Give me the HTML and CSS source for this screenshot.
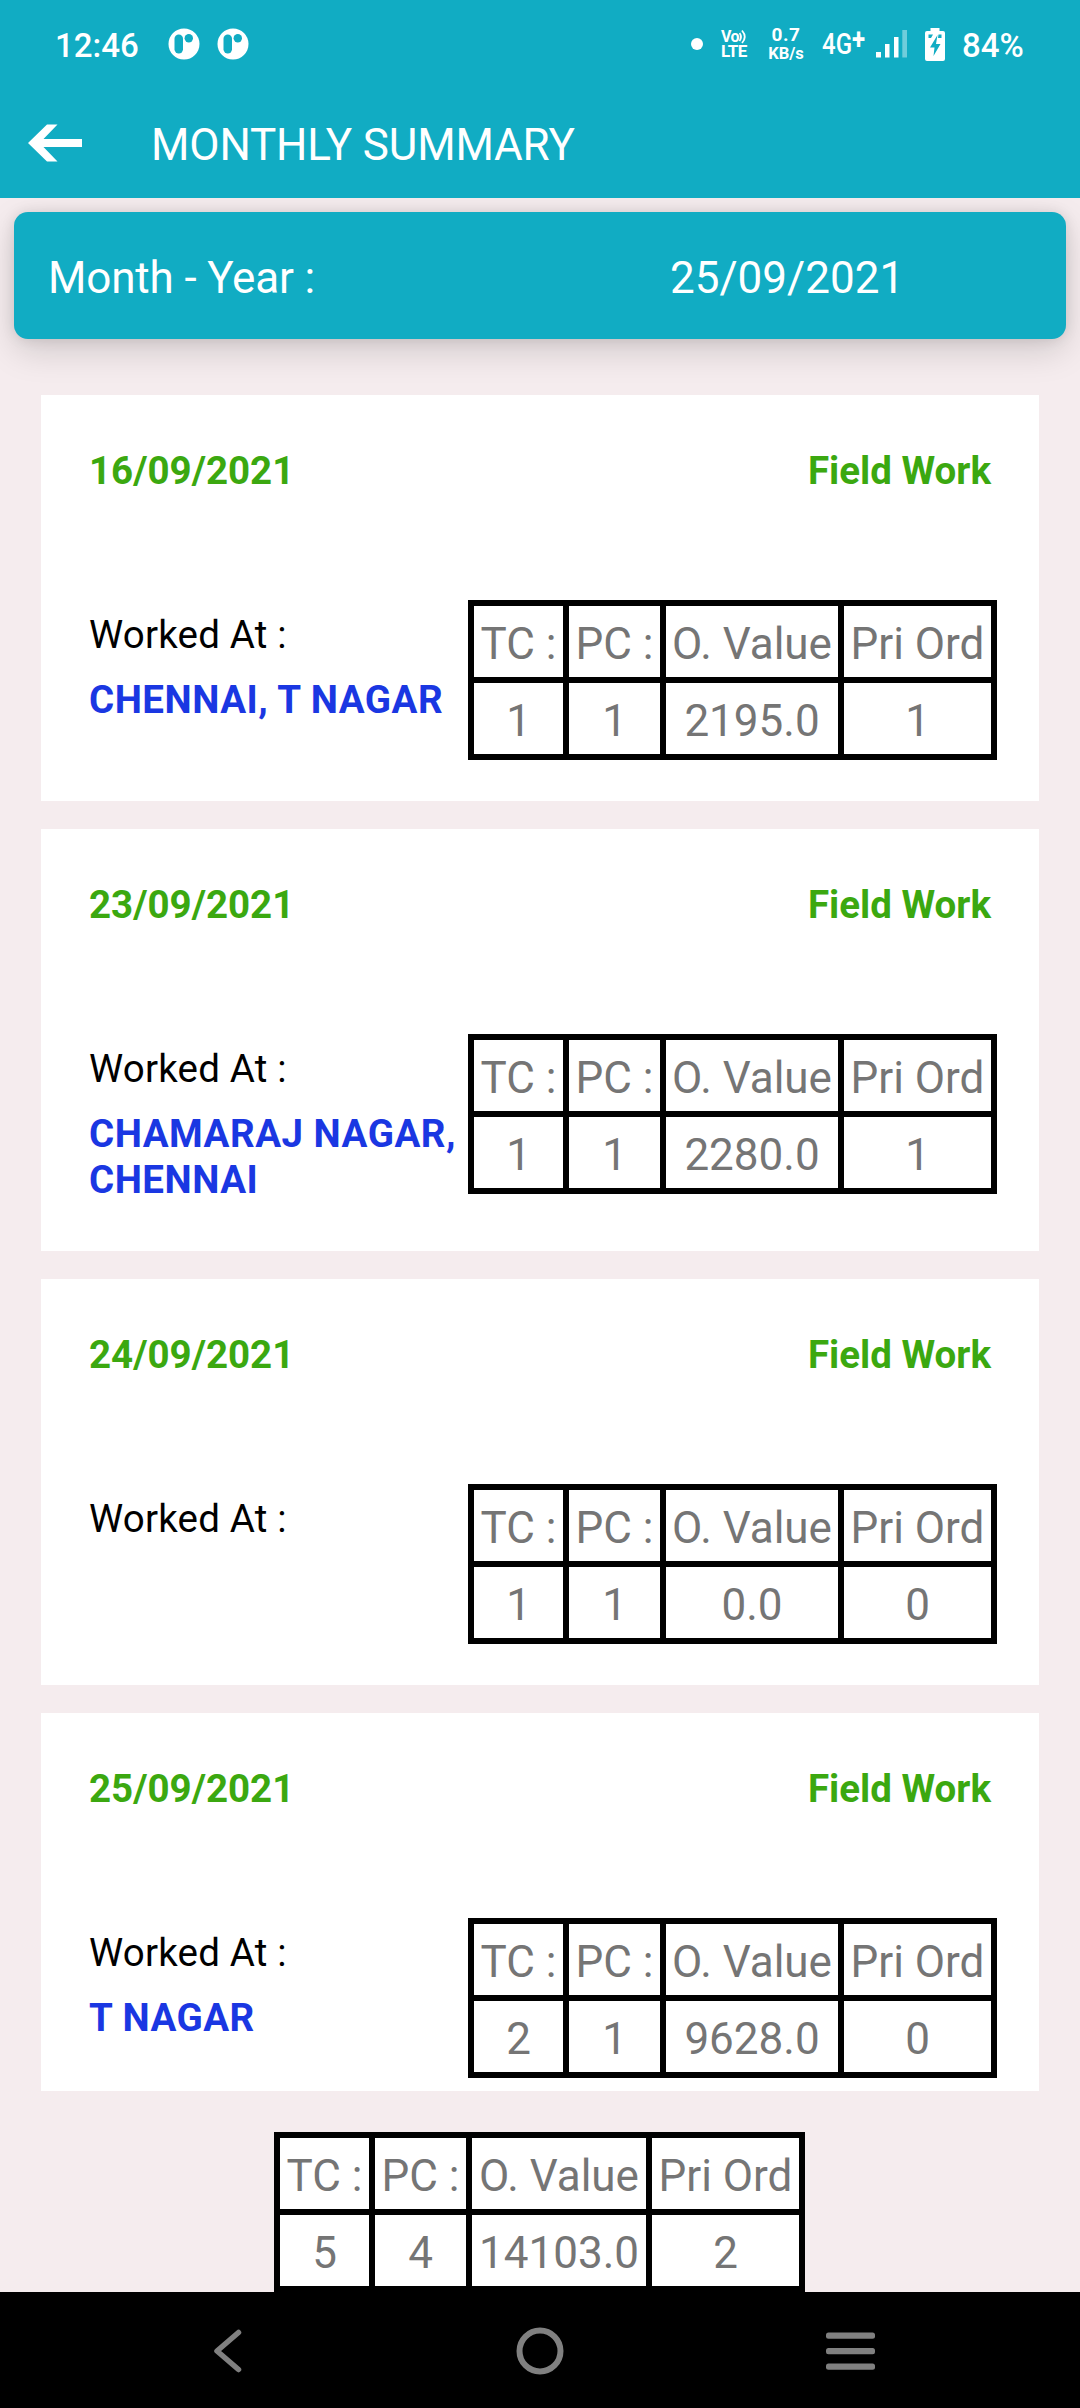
FILE: index.html
```html
<!DOCTYPE html>
<html lang="en">
<head>
<meta charset="UTF-8" />
<meta name="viewport" content="width=device-width, initial-scale=1" />
<title>Monthly Summary</title>
<link rel="stylesheet" href="styles.css">
</head>
<body>

<header class="top">
  <div class="status-bar">
    <span class="clock">12:46</span>
    <svg class="notif" width="32" height="32" viewBox="0 0 32 32">
      <circle cx="16" cy="16" r="15.5" fill="#fff" />
      <rect x="6.5" y="6.5" width="8.5" height="19" rx="4.2" fill="#11acc3" />
      <circle cx="20.8" cy="10.3" r="4.2" fill="#11acc3" />
    </svg>
    <svg class="notif" width="32" height="32" viewBox="0 0 32 32">
      <circle cx="16" cy="16" r="15.5" fill="#fff" />
      <rect x="6.5" y="6.5" width="8.5" height="19" rx="4.2" fill="#11acc3" />
      <circle cx="20.8" cy="10.3" r="4.2" fill="#11acc3" />
    </svg>
    <span class="dot"></span>
    <div class="volte">
      <div class="vo">Vo<svg width="9" height="15" viewBox="0 0 9 15" fill="none" stroke="#fff" stroke-width="1.8"><path d="M0.5 4Q3.5 8 0.5 12M3 1.5Q8.5 8 3 14" /></svg></div>
      <div class="lte">LTE</div>
    </div>
    <div class="speed"><span>0.7</span><span>KB/s</span></div>
    <div class="net"><span>4G<b>+</b></span></div>
    <svg class="signal" width="31" height="28" viewBox="0 0 31 28" fill="#fff">
      <rect x="0" y="22" width="5" height="5.5" />
      <rect x="9" y="14" width="4.5" height="13.5" />
      <rect x="18" y="7" width="4.5" height="20.5" />
      <rect x="26.3" y="0" width="4.7" height="27.5" opacity="0.4" />
    </svg>
    <svg class="battery" width="20" height="33" viewBox="0 0 20 33">
      <path d="M5.5 0h9v3h3.5q2 0 2 2v26q0 2-2 2h-16q-2 0-2-2v-26q0-2 2-2h3.5z" fill="#fff" />
      <path d="M3.500 6.500h4.500l-2 3.500h-2.500zM16.500 6.500h-3l-0.500 3.500h3.500z" fill="#11acc3" />
      <path d="M12.500 7L5 19.500h4.500L8.500 28L15.500 16h-4.500z" fill="#11acc3" />
    </svg>
    <span class="percent">84%</span>
  </div>
  <div class="app-bar">
    <svg class="back" width="54" height="38" viewBox="0 0 54 38">
      <path d="M0 19L19 0.5H29.5L15.5 15H54V23H15.5L29.5 37.5H19z" fill="#fff" />
    </svg>
    <h1>MONTHLY SUMMARY</h1>
  </div>
</header>

<div class="month">
  <span class="month-label">Month - Year :</span>
  <span class="month-value">25/09/2021</span>
</div>

<main class="list">
  <section class="card">
    <div class="card-head"><span>16/09/2021</span><span>Field Work</span></div>
    <div class="card-body">
      <div class="place">
        <p class="label">Worked At :</p>
        <p class="town">CHENNAI, T NAGAR</p>
      </div>
      <table>
        <tr><th class="tc">TC :</th><th class="pc">PC :</th><th class="val">O. Value</th><th class="pri">Pri Ord</th></tr>
        <tr><td>1</td><td>1</td><td>2195.0</td><td>1</td></tr>
      </table>
    </div>
  </section>

  <section class="card">
    <div class="card-head"><span>23/09/2021</span><span>Field Work</span></div>
    <div class="card-body">
      <div class="place">
        <p class="label">Worked At :</p>
        <p class="town">CHAMARAJ NAGAR,<br />CHENNAI</p>
      </div>
      <table>
        <tr><th class="tc">TC :</th><th class="pc">PC :</th><th class="val">O. Value</th><th class="pri">Pri Ord</th></tr>
        <tr><td>1</td><td>1</td><td>2280.0</td><td>1</td></tr>
      </table>
    </div>
  </section>

  <section class="card">
    <div class="card-head"><span>24/09/2021</span><span>Field Work</span></div>
    <div class="card-body">
      <div class="place">
        <p class="label">Worked At :</p>
        <p class="town"></p>
      </div>
      <table>
        <tr><th class="tc">TC :</th><th class="pc">PC :</th><th class="val">O. Value</th><th class="pri">Pri Ord</th></tr>
        <tr><td>1</td><td>1</td><td>0.0</td><td>0</td></tr>
      </table>
    </div>
  </section>

  <section class="card">
    <div class="card-head"><span>25/09/2021</span><span>Field Work</span></div>
    <div class="card-body">
      <div class="place">
        <p class="label">Worked At :</p>
        <p class="town">T NAGAR</p>
      </div>
      <table>
        <tr><th class="tc">TC :</th><th class="pc">PC :</th><th class="val">O. Value</th><th class="pri">Pri Ord</th></tr>
        <tr><td>2</td><td>1</td><td>9628.0</td><td>0</td></tr>
      </table>
    </div>
  </section>
</main>

<!-- Totals -->
<footer class="totals">
  <table class="total-table">
    <tr><th class="tc">TC :</th><th class="pc">PC :</th><th class="val">O. Value</th><th class="pri">Pri Ord</th></tr>
    <tr><td>5</td><td>4</td><td>14103.0</td><td>2</td></tr>
  </table>
</footer>

<nav class="nav-bar">
  <svg width="30" height="46" viewBox="0 0 30 46" fill="none" stroke="#808080" stroke-width="5.5" stroke-linecap="round" stroke-linejoin="round"><path d="M24.5 4.5L3 23L24.5 41.5" /></svg>
  <svg width="48" height="48" viewBox="0 0 48 48" fill="none" stroke="#808080" stroke-width="6"><circle cx="24" cy="24" r="20.5" /></svg>
  <svg width="50" height="38" viewBox="0 0 50 38" fill="#808080">
    <rect x="0" y="0.500" width="49" height="6.200" rx="2.500" />
    <rect x="0" y="16" width="49" height="6.200" rx="2.500" />
    <rect x="0" y="31.500" width="49" height="6.200" rx="2.500" />
  </svg>
</nav>

</body>
</html>
```
FILE: styles.css
```css
* {
  box-sizing: border-box;
}
body {
  margin: 0;
  width: 1080px;
  height: 2408px;
  overflow: hidden;
  display: flex;
  flex-direction: column;
  font-family: Roboto, "Liberation Sans", sans-serif;
  background-color: #f5ecee;
}
p, h1 {
  margin: 0;
}

/* Header */
.top {
  height: 198px;
  background-color: #11acc3;
  color: #fff;
  position: relative;
  z-index: 1;
}
.status-bar {
  height: 88px;
  display: flex;
  align-items: center;
  padding: 0 56px 0 55px;
}
.clock {
  width: 113px;
  font-size: 33px;
  font-weight: 500;
  line-height: 40px;
  padding-top: 3px;
}
.notif {
  margin-right: 17px;
}
.dot {
  width: 12px;
  height: 12px;
  border-radius: 50%;
  background-color: #fff;
  margin-left: auto;
  margin-right: 18px;
}
.volte {
  width: 28px;
  margin-right: 19px;
  font-weight: 700;
  font-size: 17px;
  line-height: 15px;
}
.vo {
  display: flex;
  height: 15px;
  font-size: 16px;
  letter-spacing: -0.5px;
}
.lte {
  letter-spacing: -0.5px;
}
.speed {
  width: 36px;
  margin-right: 18px;
  display: flex;
  flex-direction: column;
  align-items: center;
  font-weight: 700;
  font-size: 16.5px;
  line-height: 19px;
}
.speed span:first-child {
  font-size: 19px;
  letter-spacing: 0.5px;
}
.net {
  width: 54px;
  font-size: 30px;
  font-weight: 500;
  line-height: 30px;
  white-space: nowrap;
}
/* condensed network label */
.net span {
  display: inline-block;
  transform: scaleX(0.8);
  transform-origin: left;
}
.net b {
  font-size: 30px;
  font-weight: 700;
  line-height: 20px;
  vertical-align: 5px;
}
.signal {
  margin-right: 18px;
}
.battery {
  margin-right: 17px;
}
.percent {
  width: 62px;
  font-size: 33px;
  font-weight: 500;
  line-height: 40px;
  padding-top: 3px;
}
.app-bar {
  height: 110px;
  display: flex;
  align-items: center;
  padding-left: 28px;
}
.back {
  margin-right: 69px;
}
h1 {
  font-size: 44px;
  font-weight: 400;
  line-height: 52px;
  letter-spacing: -0.15px;
  padding-top: 3px;
}

/* Month selector */
.month {
  height: 127px;
  flex-shrink: 0;
  margin: 14px 14px 56px;
  padding: 4px 36px 0 34px;
  display: flex;
  align-items: center;
  border-radius: 14px;
  background-color: #11acc3;
  color: #fff;
  font-size: 44px;
  line-height: 52px;
  box-shadow: 0 12px 34px rgba(0, 0, 0, 0.15), 0 0 14px rgba(0, 0, 0, 0.1);
}
.month-label {
  width: 622px;
  letter-spacing: -0.15px;
}

/* Cards */
.list {
  height: 1696px;
  flex-shrink: 0;
  margin: 0 41px;
  overflow: hidden;
  position: relative;
}
.card {
  min-height: 406px;
  margin-bottom: 28px;
  padding: 51px 42px 41px 48px;
  background-color: #fff;
}
.card-head {
  display: flex;
  justify-content: space-between;
  height: 154px;
  padding-right: 6px;
  font-size: 38.5px;
  font-weight: 700;
  line-height: 50px;
  color: #3ba810;
}
.card-body {
  display: flex;
  align-items: flex-start;
}
.place {
  width: 379px;
  padding: 12px 0 7px;
  font-size: 38.5px;
}
.label {
  line-height: 46px;
  letter-spacing: 0.2px;
  color: #000;
}
.town {
  min-height: 46px;
  padding-top: 19px;
  line-height: 46px;
  font-weight: 700;
  letter-spacing: 0.5px;
  color: #1a37e2;
  white-space: nowrap;
}

/* Count tables */
table {
  width: 529px;
  flex-shrink: 0;
  table-layout: fixed;
  border-spacing: 6px;
  background-color: #000;
  color: #757575;
}
th, td {
  height: 71px;
  padding: 5px 0 0;
  background-color: #fff;
  font-size: 44px;
  font-weight: 400;
  line-height: 52px;
  text-align: center;
  white-space: nowrap;
}
.tc {
  width: 89px;
}
.pc {
  width: 91px;
}
.val {
  width: 172px;
}
.pri {
  width: 147px;
}
.totals {
  height: 201px;
  flex-shrink: 0;
  padding: 41px 0 0 274px;
}
.total-table {
  width: 531px;
}
.total-table .val {
  width: 174px;
}

/* Navigation */
.nav-bar {
  height: 116px;
  flex-shrink: 0;
  padding: 1px 73px 0;
  display: grid;
  grid-template-columns: repeat(3, 1fr);
  align-items: center;
  justify-items: center;
  background-color: #000;
}
```
